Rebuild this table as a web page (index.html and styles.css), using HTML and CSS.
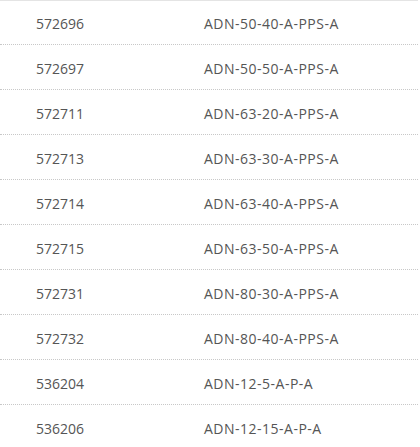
FILE: index.html
```html
<!DOCTYPE html>
<html>
<head>
<meta charset="utf-8">
<link rel="stylesheet" href="styles.css">
</head>
<body>
<div class="list">
  <div class="row first"><span class="num">572696</span><span class="code">ADN-50-40-A-PPS-A</span></div>
  <div class="row"><span class="num">572697</span><span class="code">ADN-50-50-A-PPS-A</span></div>
  <div class="row"><span class="num">572711</span><span class="code">ADN-63-20-A-PPS-A</span></div>
  <div class="row"><span class="num">572713</span><span class="code">ADN-63-30-A-PPS-A</span></div>
  <div class="row"><span class="num">572714</span><span class="code">ADN-63-40-A-PPS-A</span></div>
  <div class="row"><span class="num">572715</span><span class="code">ADN-63-50-A-PPS-A</span></div>
  <div class="row"><span class="num">572731</span><span class="code">ADN-80-30-A-PPS-A</span></div>
  <div class="row"><span class="num">572732</span><span class="code">ADN-80-40-A-PPS-A</span></div>
  <div class="row"><span class="num">536204</span><span class="code">ADN-12-5-A-P-A</span></div>
  <div class="row"><span class="num">536206</span><span class="code">ADN-12-15-A-P-A</span></div>
</div>
</body>
</html>
```
FILE: styles.css
```css
html, body {
  margin: 0;
  padding: 0;
  background: #fff;
}
.list {
  width: 418px;
  border-top: 1px solid #e4e4e4;
  font-family: "Open Sans", "Noto Sans", sans-serif;
  font-size: 14px;
  color: #555;
}
.row {
  display: flex;
  align-items: center;
  box-sizing: border-box;
  height: 45px;
  padding-top: 2px;
  border-bottom: 1px dotted #c8c8c8;
}
.row.first {
  height: 44px;
}
.num {
  width: 168px;
  padding-left: 36px;
}
.code {
  flex: 1;
  letter-spacing: 0.5px;
}
```
